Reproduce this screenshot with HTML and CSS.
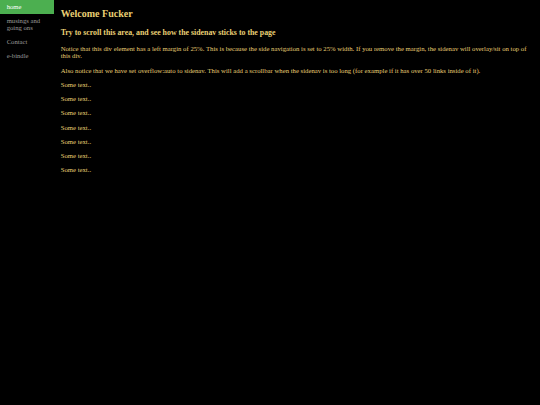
FILE: index.html
```html
<!DOCTYPE html>
<html>
<head>
<meta charset="utf-8">
<link rel="stylesheet" href="styles.css">
</head>
<body>
<div class="page">
  <ul class="sidenav">
    <li><a class="active" href="#home">home</a></li>
    <li><a href="#musings">musings and going ons</a></li>
    <li><a href="#contact">Contact</a></li>
    <li><a href="#ebindle">e-bindle</a></li>
  </ul>
  <div class="content">
    <h2>Welcome Fucker</h2>
    <h3>Try to scroll this area, and see how the sidenav sticks to the page</h3>
    <p>Notice that this div element has a left margin of 25%. This is because the side navigation is set to 25% width. If you remove the margin, the sidenav will overlay/sit on top of this div.</p>
    <p>Also notice that we have set overflow:auto to sidenav. This will add a scrollbar when the sidenav is too long (for example if it has over 50 links inside of it).</p>
    <p>Some text..</p>
    <p>Some text..</p>
    <p>Some text..</p>
    <p>Some text..</p>
    <p>Some text..</p>
    <p>Some text..</p>
    <p>Some text..</p>
  </div>
</div>
</body>
</html>
```

FILE: styles.css
```css
html, body {
  margin: 0;
  padding: 0;
  background: #000;
}
body {
  font-family: "Liberation Serif", "Times New Roman", serif;
  font-size: 6.667px;
  line-height: 7.3px;
  color: #e9cf74;
}
.page {
  display: flex;
  align-items: flex-start;
  min-height: 100vh;
}
.sidenav {
  list-style: none;
  margin: 0;
  padding: 0;
  width: 10%;
  flex: 0 0 10%;
  height: 100vh;
  background: #000;
}
.sidenav a {
  display: block;
  color: #9a9a9a;
  padding: 3.1px 6.667px 3.6px;
  text-decoration: none;
}
.sidenav a.active {
  background: #4caf50;
  color: #fff;
}
.content {
  flex: 1;
  padding: 0.4px 6.667px;
}
.content h2 {
  font-size: 10px;
  line-height: 11.5px;
  margin: 7.8px 0 8.4px;
}
.content h3 {
  font-size: 7.85px;
  line-height: 9px;
  margin: 8.4px 0 8.1px;
}
.content p {
  font-size: 6.72px;
  margin: 6.95px 0;
}
```
